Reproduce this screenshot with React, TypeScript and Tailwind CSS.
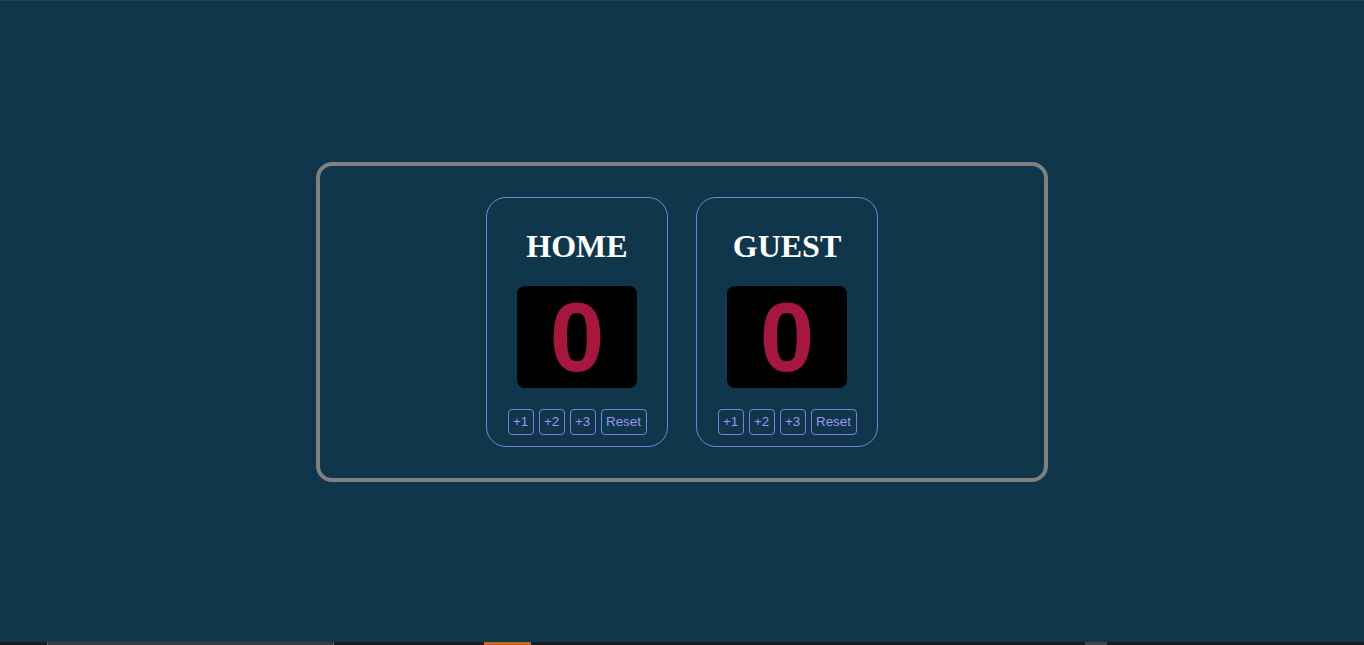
import React from "react";

function Team({ name }: { name: string }) {
  return (
    <div className="flex h-[250px] w-[182px] flex-col items-center rounded-[20px] border border-[#7f7fe0]">
      <h2 className="mt-[30px] text-[32px] font-bold leading-[36px] text-white" style={{ fontFamily: '"Liberation Serif", "Times New Roman", serif' }}>
        {name}
      </h2>
      <div className="mt-[22px] flex h-[102px] w-[120px] items-center justify-center rounded-[8px] bg-black">
        <span className="text-[98px] font-bold leading-none text-[#a5173f]" style={{ fontFamily: '"Liberation Sans", Arial, sans-serif' }}>
          0
        </span>
      </div>
      <div className="mt-[21px] flex gap-[5px]" style={{ fontFamily: '"Liberation Sans", Arial, sans-serif' }}>
        {["+1", "+2", "+3"].map((b) => (
          <button key={b} className="flex h-[26px] w-[26px] items-center justify-center rounded-[4px] border border-[#7f7fe0] text-[13.33px] text-[#9a96f2]">
            {b}
          </button>
        ))}
        <button className="flex h-[26px] w-[46px] items-center justify-center rounded-[4px] border border-[#7f7fe0] text-[13.33px] text-[#9a96f2]">
          Reset
        </button>
      </div>
    </div>
  );
}

export default function App() {
  return (
    <div className="flex h-[645px] w-full flex-col bg-[#0f364b]">
      <div className="h-px bg-[#2a3e4c]" />
      <div className="flex flex-1 items-center justify-center">
        <div className="flex h-[320px] w-[732px] items-center justify-center gap-[28px] rounded-[16px] border-4 border-[#808080]">
          <Team name="HOME" />
          <Team name="GUEST" />
        </div>
      </div>
      <div className="flex h-[3px] bg-[#1c1c1c]">
        <div className="w-[47px]" />
        <div className="w-[287px] border-x border-[#5a5a5a] bg-[#3a3a3a]" />
        <div className="w-[150px]" />
        <div className="w-[47px] bg-[#c8651f]" />
        <div className="w-[554px]" />
        <div className="w-[22px] bg-[#444444]" />
        <div className="flex-1" />
      </div>
    </div>
  );
}
